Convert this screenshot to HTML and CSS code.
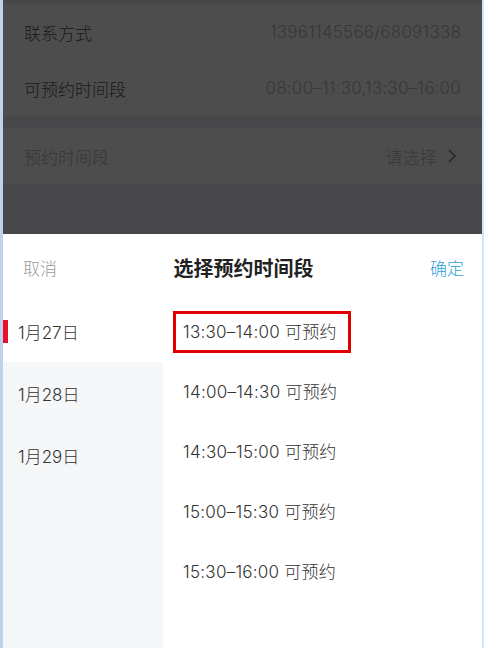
FILE: index.html
```html
<!DOCTYPE html>
<html lang="zh-CN">
<head>
    <meta charset="UTF-8">
    <meta name="viewport" content="width=device-width, initial-scale=1.0">
    <title>选择预约时间段</title>
    <link rel="stylesheet" href="styles.css">
</head>
<body>
    <div class="screen">
        <!-- Page behind the mask -->
        <div class="backdrop">
            <div class="group">
                <div class="row">
                    <span class="label">联系方式</span>
                    <span class="value">13961145566/68091338</span>
                </div>
                <div class="row">
                    <span class="label">可预约时间段</span>
                    <span class="value">08:00–11:30,13:30–16:00</span>
                </div>
            </div>
            <div class="group">
                <div class="row">
                    <span class="label muted">预约时间段</span>
                    <span class="value">请选择
                        <svg class="chevron" width="10" height="16" viewBox="0 0 10 16">
                            <path d="M2 2 L8 8 L2 14" fill="none" stroke="#2e2e2e" stroke-width="2"/>
                        </svg>
                    </span>
                </div>
            </div>
        </div>

        <!-- Bottom sheet -->
        <div class="sheet">
            <div class="sheet-header">
                <span class="cancel">取消</span>
                <span class="title">选择预约时间段</span>
                <span class="confirm">确定</span>
            </div>
            <div class="sheet-body">
                <ul class="dates">
                    <li class="active">1月27日</li>
                    <li>1月28日</li>
                    <li>1月29日</li>
                </ul>
                <ul class="slots">
                    <li><span class="mark">13:30–14:00 可预约</span></li>
                    <li>14:00–14:30 可预约</li>
                    <li>14:30–15:00 可预约</li>
                    <li>15:00–15:30 可预约</li>
                    <li>15:30–16:00 可预约</li>
                </ul>
            </div>
        </div>
    </div>
</body>
</html>
```

FILE: styles.css
```css
/* General Styles */
html, body {
    margin: 0;
    padding: 0;
}

body {
    font-family: Inter, "Noto Sans CJK SC", sans-serif;
    font-weight: 300;
    background-color: #ffffff;
}

ul {
    list-style: none;
    margin: 0;
    padding: 0;
}

.screen {
    width: 484px;
    height: 648px;
    box-sizing: border-box;
    border-left: 3px solid #bcd2ef;
    border-right: 2px solid #d4e2f3;
    display: flex;
    flex-direction: column;
    overflow: hidden;
}

/* Masked page */
.backdrop {
    height: 234px;
    background-color: #48484a;
    padding-top: 4px;
    box-sizing: border-box;
}

.group {
    background-color: #4d4d4d;
    padding: 0 21px;
    margin-bottom: 12px;
}

.row {
    height: 56px;
    display: flex;
    justify-content: space-between;
    align-items: center;
    font-size: 17px;
}

.label {
    color: #181818;
}

.label.muted {
    color: #363636;
}

.value {
    color: #383838;
    font-size: 17px;
    letter-spacing: 0.2px;
    display: flex;
    align-items: center;
    gap: 10px;
}

.chevron {
    margin-right: 4px;
}

/* Sheet */
.sheet {
    flex: 1;
    display: flex;
    flex-direction: column;
    background-color: #ffffff;
}

.sheet-header {
    height: 66px;
    display: flex;
    align-items: center;
    justify-content: space-between;
    padding: 0 18px 0 20px;
}

.cancel {
    color: #9a9a9a;
    font-size: 17px;
}

.title {
    color: #222222;
    font-size: 20px;
    font-weight: bold;
}

.confirm {
    color: #2f9fd8;
    font-size: 17px;
}

.sheet-body {
    flex: 1;
    display: flex;
}

.dates {
    width: 160px;
    background-color: #f6f7f9;
}

.dates li {
    height: 62px;
    display: flex;
    align-items: center;
    padding-left: 15px;
    font-size: 17px;
    color: #333333;
    position: relative;
}

.dates li.active {
    background-color: #ffffff;
}

.dates li.active::before {
    content: "";
    position: absolute;
    left: 0;
    top: 20px;
    width: 5px;
    height: 23px;
    background-color: #e8112d;
}

.slots {
    flex: 1;
    padding-left: 20px;
    padding-top: 2px;
}

.slots li {
    height: 60px;
    display: flex;
    align-items: center;
    font-size: 17px;
    line-height: 20px;
    letter-spacing: 0.25px;
    color: #333333;
}

.mark {
    border: 3px solid #e00000;
    padding: 8px 11px 8px 7px;
    margin-left: -10px;
}
```
